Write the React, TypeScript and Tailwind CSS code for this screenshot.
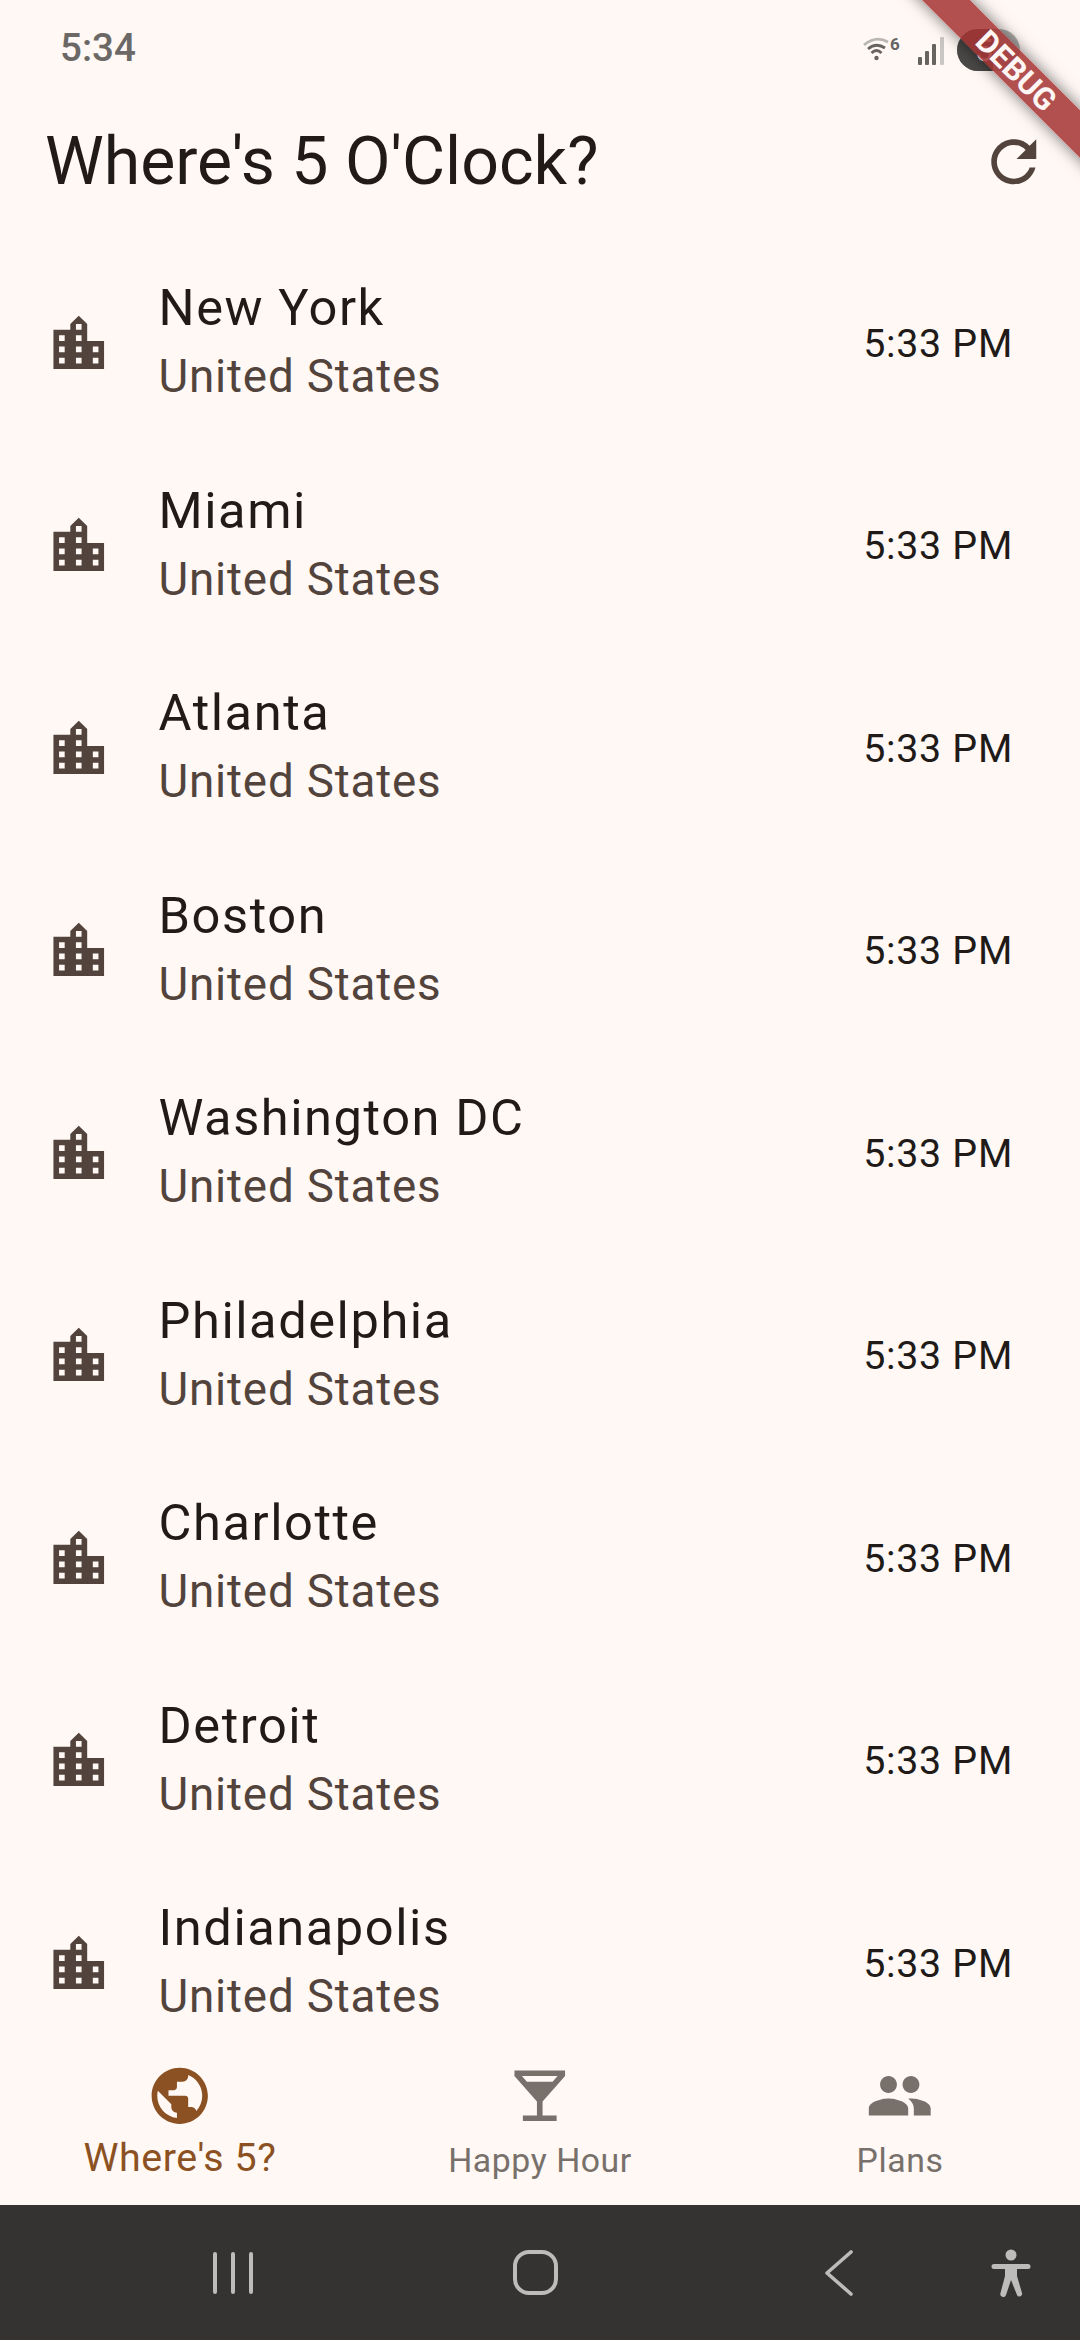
const cities = ["New York", "Miami", "Atlanta", "Boston", "Washington DC", "Philadelphia", "Charlotte", "Detroit", "Indianapolis"]

function Icon({ d, className }: { d: string; className: string }) {
  return (
    <svg viewBox="0 0 24 24" className={className} fill="currentColor">
      <path d={d} />
    </svg>
  )
}

const cityIcon = "M15 11V5l-3-3-3 3v2H3v14h18V11h-6zm-8 8H5v-2h2v2zm0-4H5v-2h2v2zm0-4H5V9h2v2zm6 8h-2v-2h2v2zm0-4h-2v-2h2v2zm0-4h-2V9h2v2zm0-4h-2V5h2v2zm6 12h-2v-2h2v2zm0-4h-2v-2h2v2z"
const refreshIcon = "M17.65 6.35C16.2 4.9 14.21 4 12 4c-4.42 0-7.99 3.58-7.99 8s3.57 8 7.99 8c3.73 0 6.84-2.55 7.73-6h-2.08c-.82 2.33-3.04 4-5.65 4-3.31 0-6-2.69-6-6s2.69-6 6-6c1.66 0 3.14.69 4.22 1.78L13 11h7V4l-2.35 2.35z"
const globeIcon = "M12 2C6.48 2 2 6.48 2 12s4.48 10 10 10 10-4.48 10-10S17.52 2 12 2zm-1 17.93c-3.95-.49-7-3.85-7-7.93 0-.62.08-1.21.21-1.79L9 15v1c0 1.1.9 2 2 2v1.93zm6.9-2.54c-.26-.81-1-1.39-1.9-1.39h-1v-3c0-.55-.45-1-1-1H8v-2h2c.55 0 1-.45 1-1V7h2c1.1 0 2-.9 2-2v-.41c2.93 1.19 5 4.06 5 7.41 0 2.08-.8 3.97-2.1 5.39z"
const barIcon = "M21 5V3H3v2l8 9v5H6v2h12v-2h-5v-5l8-9zM7.43 7L5.66 5h12.69l-1.78 2H7.43z"
const groupIcon = "M16 11c1.66 0 2.99-1.34 2.99-3S17.66 5 16 5c-1.66 0-3 1.34-3 3s1.34 3 3 3zm-8 0c1.66 0 2.99-1.34 2.99-3S9.66 5 8 5C6.34 5 5 6.34 5 8s1.34 3 3 3zm0 2c-2.33 0-7 1.17-7 3.5V19h14v-2.5c0-2.33-4.67-3.5-7-3.5zm8 0c-.29 0-.62.02-.97.05 1.16.84 1.97 1.97 1.97 3.45V19h6v-2.5c0-2.33-4.67-3.5-7-3.5z"

function StatusBar() {
  return (
    <div className="h-[82px] shrink-0 flex items-center pl-[60px] pr-[60px] pt-[18px] pb-[4px] text-[#6b6866]">
      <span className="text-[38.5px] leading-none font-medium">5:34</span>
      <div className="ml-auto flex items-center">
        <svg viewBox="0 -6 40 31" className="w-[40px] h-[31px] -mt-[6px]">
          <path d="M1 9 Q13 -1 25 6" fill="none" stroke="#b9b6b3" strokeWidth="2.8" />
          <path d="M5 13 Q13 6 22 12" fill="none" stroke="#666361" strokeWidth="2.8" />
          <path d="M8.5 17 Q13.5 12 18.5 17" fill="none" stroke="#666361" strokeWidth="2.8" />
          <circle cx="13.5" cy="22" r="2.2" fill="#666361" />
          <text x="27" y="13.5" fontSize="17" fontWeight="700" fill="#666361" fontFamily="Roboto">6</text>
        </svg>
        <svg viewBox="0 0 28 28" className="w-[28px] h-[28px] ml-[14px] mt-[5px]">
          <rect x="1" y="20" width="4" height="8" rx="1" fill="#666361" />
          <rect x="8" y="14" width="4" height="14" rx="1" fill="#666361" />
          <rect x="15" y="7" width="4" height="21" rx="1" fill="#666361" />
          <rect x="23" y="0" width="4" height="28" rx="1" fill="#c9c6c3" />
        </svg>
        <div className="ml-[12px] mt-[4px] w-[63px] h-[42px] rounded-full bg-[#b0aeab] overflow-hidden flex">
          <div className="w-[36px] h-full bg-[#4a4947] flex items-center justify-end">
            <span className="text-[32px] leading-none text-[#f4f1ee]">5</span>
          </div>
        </div>
      </div>
    </div>
  )
}

function CityRow({ name }: { name: string }) {
  return (
    <div className="h-[202.5px] shrink-0 flex items-center pl-[45px] pr-[67px]">
      <Icon d={cityIcon} className="w-[67.5px] h-[67.5px] shrink-0 text-[#52443c]" />
      <div className="ml-[46px] flex flex-col -mt-[1px]">
        <span className="text-[50.6px] leading-[69px] tracking-[1.55px] text-[#201a18]">{name}</span>
        <span className="text-[45.8px] leading-[70px] tracking-[0.8px] text-[#52443c]">United States</span>
      </div>
      <span className="ml-auto text-[39.4px] tracking-[0.7px] text-[#201a18]">5:33 PM</span>
    </div>
  )
}

function Tab({ d, label, active }: { d: string; label: string; active?: boolean }) {
  return (
    <div className={active ? "flex-1 flex flex-col items-center text-[#8b5122]" : "flex-1 flex flex-col items-center text-[#77706b]"}>
      <Icon d={d} className="w-[67.5px] h-[67.5px]" />
      <span className={active ? "text-[39.4px] leading-[56px] tracking-[0.55px]" : "text-[33.8px] leading-[62px] tracking-[0.55px]"}>{label}</span>
    </div>
  )
}

export default function App() {
  return (
    <div className="relative w-[1080px] h-[2340px] overflow-hidden flex flex-col bg-[#fff8f5] font-['Roboto',sans-serif]">
      <StatusBar />
      <header className="h-[158px] shrink-0 flex items-center pl-[45px] pr-[33px]">
        <h1 className="text-[66.2px] leading-none font-normal text-[#201a18] mt-[2px]">Where's 5 O'Clock?</h1>
        <Icon d={refreshIcon} className="ml-auto w-[67.5px] h-[67.5px] text-[#52443c] mt-[1px]" />
      </header>
      <main className="flex-1 min-h-0 overflow-hidden pt-[2px] flex flex-col">
        {cities.map((city) => (
          <CityRow key={city} name={city} />
        ))}
      </main>
      <nav className="h-[164px] shrink-0 pt-[21px] flex bg-[#fff8f4]">
        <Tab d={globeIcon} label="Where's 5?" active />
        <Tab d={barIcon} label="Happy Hour" />
        <Tab d={groupIcon} label="Plans" />
      </nav>
      <div className="h-[135px] shrink-0 bg-[#343331] flex items-center text-[#bdbcba]">
        <div className="ml-[213px] flex gap-[14px]">
          <div className="w-[4px] h-[42px] rounded-full bg-[#bdbcba]" />
          <div className="w-[4px] h-[42px] rounded-full bg-[#bdbcba]" />
          <div className="w-[4px] h-[42px] rounded-full bg-[#bdbcba]" />
        </div>
        <div className="ml-[260px] w-[45px] h-[45px] rounded-[16px] border-[4px] border-[#bdbcba]" />
        <svg viewBox="0 0 28 46" className="ml-[267px] w-[28px] h-[46px]" fill="none" stroke="currentColor" strokeWidth="3.6" strokeLinecap="round" strokeLinejoin="round">
          <path d="M26 2 L2 23 L26 44" />
        </svg>
        <svg viewBox="0 0 40 48" className="ml-[138px] w-[40px] h-[48px]" fill="currentColor">
          <circle cx="20" cy="6" r="5.5" />
          <path d="M3 15 H37 A2.5 2.5 0 0 1 37 20 L26 20 L26 27 L31 44 A2.7 2.7 0 0 1 26 46 L20 31 L15 46 A2.7 2.7 0 0 1 9.5 44 L14 27 L14 20 L3 20 A2.5 2.5 0 0 1 3 15 Z" />
        </svg>
      </div>
      {/* debug ribbon over the corner */}
      <div className="absolute left-[863px] top-[50px] w-[300px] h-[34px] rotate-45 flex items-center justify-center pl-[10px] bg-[#a53232]/85 shadow-[0_0_16px_rgba(0,0,0,0.55)]">
        <span className="text-[31px] leading-none font-bold text-[#fdf6f4]">DEBUG</span>
      </div>
    </div>
  )
}
